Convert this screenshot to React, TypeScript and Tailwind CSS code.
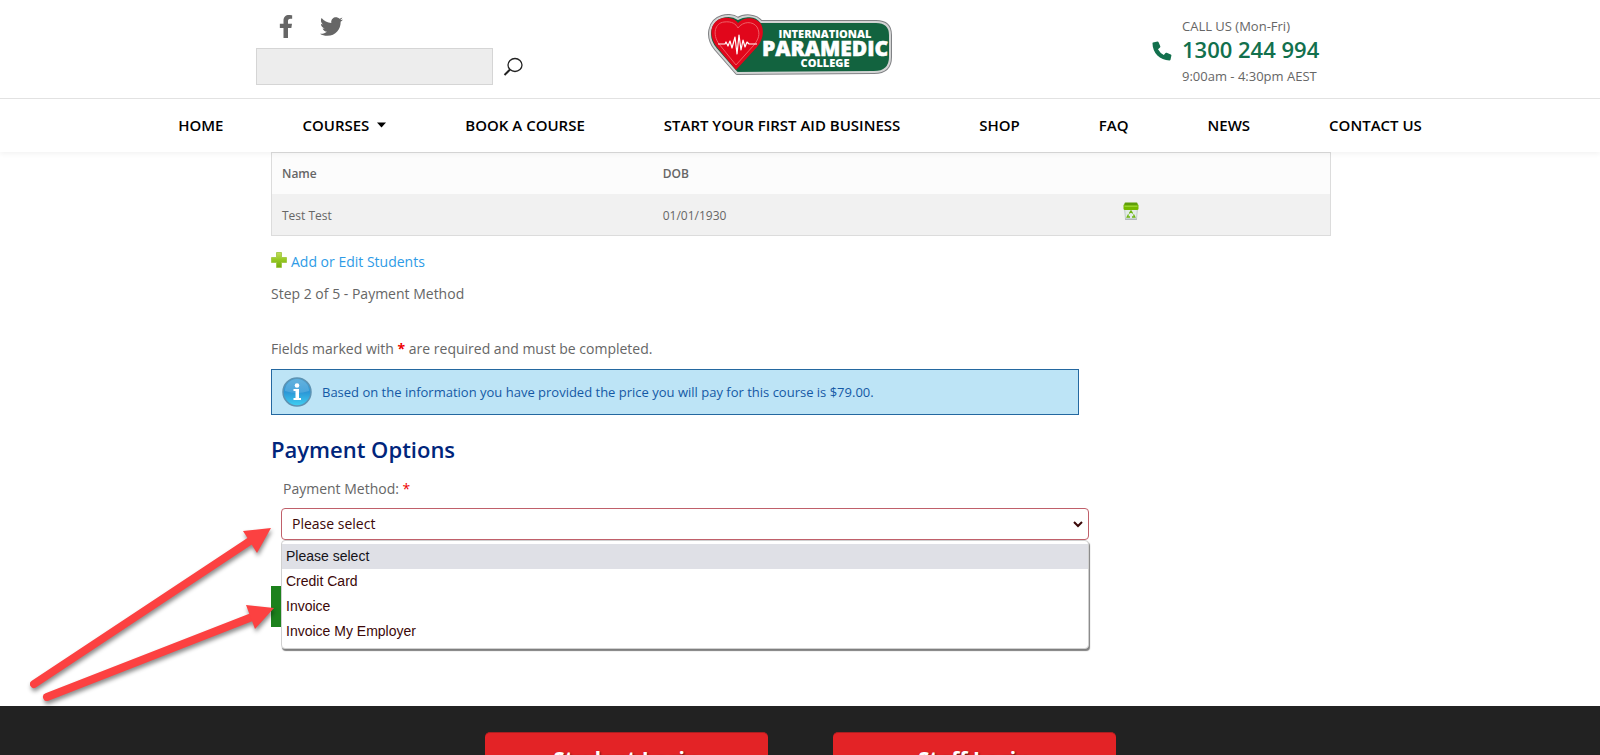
import { FaFacebookF, FaTwitter } from 'react-icons/fa';

interface Student {
  name: string;
  dob: string;
}

const students: Student[] = [{ name: 'Test Test', dob: '01/01/1930' }];

const navItems = [
  { label: 'HOME' },
  { label: 'COURSES', hasMenu: true },
  { label: 'BOOK A COURSE' },
  { label: 'START YOUR FIRST AID BUSINESS' },
  { label: 'SHOP' },
  { label: 'FAQ' },
  { label: 'NEWS' },
  { label: 'CONTACT US' },
];

const paymentOptions = ['Please select', 'Credit Card', 'Invoice', 'Invoice My Employer'];

function Logo() {
  const outline =
    'M29 58 L8 34 C-2 22 1 6 14 2 C21 0 26 1 30 4 C36 0 48 0 53 7 H168 Q182 7 182 20 V42 Q182 57 166 57 Z';
  return (
    <svg width="186" height="62" viewBox="-1 -1 186 62" role="img" aria-label="International Paramedic College">
      <path d={outline} fill="#12633f" stroke="#808285" strokeWidth="4" strokeLinejoin="round" />
      <path d={outline} fill="#12633f" stroke="#d3d4d4" strokeWidth="2" strokeLinejoin="round" />
      <path d="M28 55 L8 31 C-1 18 4 5 15 3 C23 2 28 5 30 8 C35 2 47 1 53 9 C57 17 54 26 49 32 Z" fill="#e1061b" />
      <path
        d="M28 50 L11 29 C4 19 7 8 16 7 C24 6 28 9 30 13 C35 6 45 6 49 12 C53 19 50 25 46 30 Z"
        fill="none"
        stroke="#ee5f66"
        strokeWidth="1"
      />
      <path
        d="M10 29 H17 L18 27 L20 31 L22 26 L24 33 L27 22 L29 39 L31 20 L33 35 L35 25 L37 32 L39 27 L41 29 H49"
        fill="none"
        stroke="#fff"
        strokeWidth="1.200"
        strokeLinejoin="round"
      />
      <g fill="#fff" textAnchor="middle" fontFamily="'Open Sans', sans-serif" fontWeight="800">
        <text x="117" y="23" fontSize="11">INTERNATIONAL</text>
        <text x="117" y="41" fontSize="21" stroke="#fff" strokeWidth="0.500">PARAMEDIC</text>
        <text x="117" y="52" fontSize="11">COLLEGE</text>
      </g>
    </svg>
  );
}

function PhoneIcon() {
  return (
    <svg width="20" height="20" viewBox="0 0 20 20" fill="#12704d" className="mt-[26px]">
      <path d="M1 1.500 L5.500 0.500 Q6.300 0.500 6.600 1.200 L8.300 5.300 Q8.500 6 8 6.500 L6 8.200 Q8.200 12.200 11.800 14 L13.500 12 Q14 11.500 14.700 11.800 L18.800 13.500 Q19.500 13.800 19.400 14.500 L18.500 18.700 Q18.200 19.400 17.500 19.400 C8 19.400 0.500 12 0.500 2.300 Q0.500 1.700 1 1.500 Z" />
    </svg>
  );
}

function TrashIcon() {
  return (
    <svg width="16" height="18" viewBox="0 0 16 18" className="inline-block">
      <path d="M1.500 6 H14.500 L13.500 17 H2.500 Z" fill="#e3ebe8" stroke="#b9c5c1" strokeWidth="0.800" />
      <path d="M2 17.300 H14" stroke="#9aa5a3" strokeWidth="0.800" />
      <rect x="0.500" y="2" width="15" height="6" rx="1.500" fill="#76b900" />
      <rect x="1.500" y="0.500" width="13" height="3" rx="1" fill="#5f9e0a" />
      <rect x="1.500" y="3.500" width="13" height="1.500" fill="#97d42c" />
      <path d="M6.300 11.500 L8 9 L9.700 11.500 M10.500 12.500 L11.800 15 H9 M7 15 H4.200 L5.500 12.500" fill="none" stroke="#6cb50f" strokeWidth="1.300" />
    </svg>
  );
}

function PlusIcon() {
  return (
    <svg width="16" height="18" viewBox="0 1 16 18">
      <defs>
        <linearGradient id="plus" x1="0" y1="0" x2="0" y2="1">
          <stop offset="0" stopColor="#c2de5a" />
          <stop offset="0.500" stopColor="#95c822" />
          <stop offset="1" stopColor="#74ac10" />
        </linearGradient>
      </defs>
      <path d="M5.500 1.500 H10.500 V6.500 H15.500 V11.500 H10.500 V16.500 H5.500 V11.500 H0.500 V6.500 H5.500 Z" fill="url(#plus)" stroke="#9cc43a" strokeWidth="0.800" />
    </svg>
  );
}

function InfoIcon() {
  return (
    <svg width="30" height="30" viewBox="0 0 30 30" className="shrink-0">
      <defs>
        <linearGradient id="info" x1="0" y1="0" x2="0" y2="1">
          <stop offset="0" stopColor="#4aa5d8" />
          <stop offset="0.500" stopColor="#2b96d6" />
          <stop offset="1" stopColor="#3fd0f2" />
        </linearGradient>
      </defs>
      <circle cx="15" cy="15" r="14" fill="url(#info)" stroke="#5d93b3" strokeWidth="1.500" />
      <path d="M3 14 A12 12 0 0 1 27 14 Q15 18 3 14 Z" fill="#fff" opacity="0.150" />
      <circle cx="15" cy="8.500" r="2.300" fill="#fff" />
      <path d="M11.500 12 H17 V21 H19 V23 H11.500 V21 H13.500 V14 H11.500 Z" fill="#fff" />
    </svg>
  );
}

function Header() {
  return (
    <header className="relative z-10 bg-white shadow-[0_2px_5px_rgba(0,0,0,0.05)]">
      <div className="border-b border-[#e2e2e2]">
        <div className="mx-auto flex h-[98px] max-w-[1090px] items-start justify-between pl-px pr-6">
          <div className="flex w-[400px] flex-col pt-[15px]">
            <div className="flex gap-6 pl-5 text-[#666]">
              <a href="#" aria-label="Facebook" className="flex w-5 justify-center">
                <FaFacebookF size={23} />
              </a>
              <a href="#" aria-label="Twitter">
                <FaTwitter size={23} />
              </a>
            </div>
            <form className="mt-2.5 flex items-center gap-2.5">
              <input type="text" aria-label="Search" className="h-[37px] w-[237px] border border-[#d5d5d5] bg-[#ededed] px-2" />
              <button type="button" aria-label="Submit search">
                <svg width="20" height="20" viewBox="0 0 20 20" fill="none" stroke="#222">
                  <ellipse cx="12" cy="8" rx="7" ry="6.500" strokeWidth="1.300" />
                  <path d="M7 12.500 L1.500 18" strokeWidth="2" />
                </svg>
              </button>
            </form>
          </div>
          <a href="#" className="mt-3.5">
            <Logo />
          </a>
          <div className="flex w-[378px] justify-end gap-2.5 pt-[15px]">
            <PhoneIcon />
            <div className="w-[139px] whitespace-nowrap text-[13px] leading-[22px] text-[#666]">
              <div>CALL US (Mon-Fri)</div>
              <div className="text-[22px] font-semibold leading-6 text-[#12704d]">1300 244 994</div>
              <div className="mt-1">9:00am - 4:30pm AEST</div>
            </div>
          </div>
        </div>
      </div>
      <nav className="flex h-[53px] items-center justify-center gap-[79px] whitespace-nowrap text-[15px] font-semibold text-black">
        {navItems.map((item) => (
          <a key={item.label} href="#" className="flex items-center gap-2">
            {item.label}
            {item.hasMenu && (
              <svg width="9" height="6" viewBox="0 0 9 6">
                <path d="M0 0.500 H9 L4.500 5.500 Z" />
              </svg>
            )}
          </a>
        ))}
      </nav>
    </header>
  );
}

function StudentTable() {
  return (
    <table className="w-full table-fixed border border-[#dcdcdc] text-left text-xs text-[#666]">
      <thead>
        <tr className="h-[41px] bg-[#fcfcfc]">
          <th className="w-[36%] px-2.5 pt-0.5 font-semibold">Name</th>
          <th className="px-2.5 pt-0.5 font-semibold">DOB</th>
          <th className="w-[398px]"></th>
        </tr>
      </thead>
      <tbody>
        {students.map((student) => (
          <tr key={student.name} className="h-[42px] bg-[#f1f1f1]">
            <td className="px-2.5 pt-1">{student.name}</td>
            <td className="px-2.5 pt-1">{student.dob}</td>
            <td className="pb-1.5 text-center">
              <button type="button" aria-label="Remove student">
                <TrashIcon />
              </button>
            </td>
          </tr>
        ))}
      </tbody>
    </table>
  );
}

function PaymentMethod() {
  return (
    <div className="relative ml-2.5 w-[808px]">
      <label htmlFor="payment-method" className="block pl-0.5 leading-5">
        Payment Method: <span className="text-[#e00]">*</span>
      </label>
      <div className="relative mt-[9px]">
        <select
          id="payment-method"
          className="block h-8 w-full appearance-none rounded border border-[#c0606a] bg-white px-2.5 text-sm text-[#3b0808]"
        >
          {paymentOptions.map((option) => (
            <option key={option}>{option}</option>
          ))}
        </select>
        <svg width="10" height="7" viewBox="0 0 10 7" className="pointer-events-none absolute right-1.5 top-[13px]" fill="none" stroke="#3b0808" strokeWidth="2">
          <path d="M1 1 L5 5 L9 1" />
        </svg>
      </div>
      <ul
        role="listbox"
        aria-label="Payment Method"
        className="absolute inset-x-0 top-full z-10 rounded border border-[#d0d0d0] bg-white pb-1 pt-[3px] font-['Liberation_Sans',Arial,sans-serif] text-sm leading-[25px] text-[#3b0808] shadow-[1px_2px_1px_rgba(0,0,0,0.5)]"
      >
        {paymentOptions.map((option, i) => (
          <li
            key={option}
            role="option"
            aria-selected={i === 0}
            className={i === 0 ? 'bg-[#dfe0e6] px-1 text-[#15141a]' : 'px-1'}
          >
            {option}
          </li>
        ))}
      </ul>
    </div>
  );
}

function Arrows() {
  return (
    <svg
      width="290"
      height="200"
      viewBox="0 510 290 200"
      className="pointer-events-none absolute left-0 top-[510px] z-20 drop-shadow-[1px_3px_2px_rgba(0,0,0,0.45)]"
    >
      <g stroke="#fc4141" strokeWidth="8" strokeLinecap="round">
        <path d="M34 684 L250 541" />
        <path d="M47 697 L252 617" />
      </g>
      <g fill="#fc4141">
        <path d="M271 528 L243 531 L257 553 Z" />
        <path d="M274 608 L246 605 L255 629 Z" />
      </g>
    </svg>
  );
}

export default function App() {
  return (
    <div className="relative flex h-screen flex-col overflow-hidden bg-white font-['Open_Sans',sans-serif] text-sm text-[#666]">
      <Header />
      <main className="mx-auto w-full max-w-[1090px] shrink-0 pb-[79px] pl-4 pr-3.5">
        <StudentTable />
        <a href="#" className="mt-4 flex items-start gap-1 leading-5 text-[#2e9be6]">
          <PlusIcon />
          Add or Edit Students
        </a>
        <p className="mt-3 leading-5">Step 2 of 5 - Payment Method</p>
        <p className="mt-[35px] leading-5">
          Fields marked with <span className="font-bold text-[#e00]">*</span> are required and must be completed.
        </p>
        <div className="mt-2.5 flex h-[46px] w-[808px] items-center gap-2.5 border border-[#2468a0] bg-[#bde4f6] pl-2.5 text-[13px] text-[#1459a5]">
          <InfoIcon />
          Based on the information you have provided the price you will pay for this course is $79.00.
        </div>
        <h2 className="mb-4 mt-5 text-[22px] font-semibold leading-7 text-[#00257b]">Payment Options</h2>
        <PaymentMethod />
        <button type="button" aria-label="Next" className="mt-[46px] block h-[41px] w-20 bg-[#1c811c]"></button>
      </main>
      <footer className="flex shrink-0 justify-center gap-[65px] bg-[#222] pb-8 pt-[26px]">
        {['Student Login', 'Staff Login'].map((label) => (
          <a
            key={label}
            href="#"
            className="w-[283px] rounded-[5px] border-t border-[#a91e20] bg-[#e32326] py-3 text-center text-[21px] font-bold leading-7 text-white [text-shadow:1px_1px_2px_rgba(0,0,0,0.6)]"
          >
            {label}
          </a>
        ))}
      </footer>
      <Arrows />
    </div>
  );
}
